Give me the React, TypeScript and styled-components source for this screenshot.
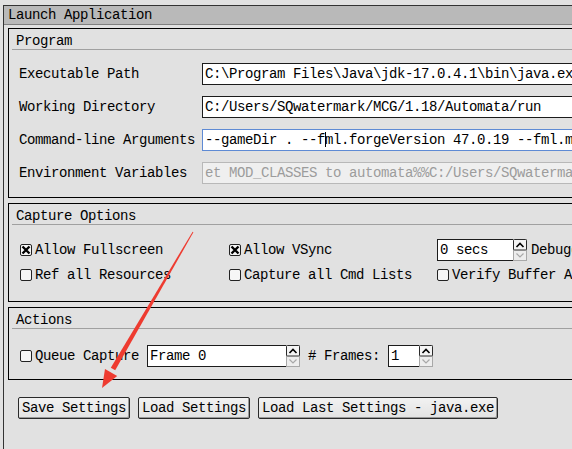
import styled, { createGlobalStyle } from 'styled-components';

const GlobalStyle = createGlobalStyle`
  html, body {
    margin: 0;
    padding: 0;
    background: #e1e1e1;
    overflow: hidden;
  }

  body {
    font-family: 'Liberation Mono', 'DejaVu Sans Mono', monospace;
    font-size: 14px;
    letter-spacing: -0.4px;
    color: #000;
  }
`;

type CheckProps = {
  label: string;
  checked?: boolean;
};

function Check({ label, checked }: CheckProps) {
  return (
    <CheckRow>
      <CheckBox>
        {checked && (
          <svg width='10' height='10' viewBox='0 0 10 10'>
            <path d='M1.5 1.5 L8.5 8.5 M8.5 1.5 L1.5 8.5' stroke='#000' strokeWidth='2.4' />
          </svg>
        )}
      </CheckBox>
      <span>{label}</span>
    </CheckRow>
  );
}

function SpinArrows() {
  return (
    <svg width='14' height='22' viewBox='0 0 14 22'>
      <rect x='0.5' y='0.5' width='13' height='21' fill='#ededed' stroke='#a8a8a8' />
      <rect x='0.5' y='0.5' width='13' height='10.5' rx='1' fill='#f4f4f4' stroke='#2a2a2a' />
      <path d='M3.5 8 L7 4.5 L10.5 8' stroke='#000' strokeWidth='1.6' fill='none' />
      <path d='M3.5 14.5 L7 18 L10.5 14.5' stroke='#a8a8a8' strokeWidth='1.2' fill='none' />
    </svg>
  );
}

type SpinProps = {
  value: string;
  width: number;
};

function Spin({ value, width }: SpinProps) {
  return (
    <SpinWrap>
      <SpinField $width={width}>{value}</SpinField>
      <SpinArrows />
    </SpinWrap>
  );
}

export default function App() {
  return (
    <Page>
      <GlobalStyle />
      <Window>
        <TitleBar>Launch Application</TitleBar>
        <Content>
          <GroupBox>
            <GroupTitle>Program</GroupTitle>
            <ProgramGrid>
              <Label>Executable Path</Label>
              <Field>C:\Program Files\Java\jdk-17.0.4.1\bin\java.exe</Field>
              <Label>Working Directory</Label>
              <Field>C:/Users/SQwatermark/MCG/1.18/Automata/run</Field>
              <Label>Command-line Arguments</Label>
              <Field $variant='focused'>
                --gameDir . --f<Caret />ml.forgeVersion 47.0.19 --fml.mcVersion 1.20.1
              </Field>
              <Label>Environment Variables</Label>
              <Field $variant='disabled'>
                et MOD_CLASSES to automata%%C:/Users/SQwatermark/MCG/1.18/Automata/run
              </Field>
            </ProgramGrid>
          </GroupBox>

          <GroupBox>
            <GroupTitle>Capture Options</GroupTitle>
            <CaptureGrid>
              <Check label='Allow Fullscreen' checked />
              <Check label='Allow VSync' checked />
              <InlineRow>
                <Spin value='0 secs' width={76} />
                <Text>Debugger Delay</Text>
              </InlineRow>
              <Check label='Ref all Resources' />
              <Check label='Capture all Cmd Lists' />
              <Check label='Verify Buffer Access' />
            </CaptureGrid>
          </GroupBox>

          <GroupBox>
            <GroupTitle>Actions</GroupTitle>
            <ActionsRow>
              <Check label='Queue Capture' />
              <Spin value='Frame 0' width={139} />
              <Text># Frames:</Text>
              <Spin value='1' width={31} />
            </ActionsRow>
          </GroupBox>

          <ButtonRow>
            <Button>Save Settings</Button>
            <Button>Load Settings</Button>
            <Button>Load Last Settings - java.exe</Button>
          </ButtonRow>
        </Content>
      </Window>

      <Annotation width='572' height='449' viewBox='0 0 572 449'>
        <polygon
          points='193.4,232.3 192.6,231.7 110.8,367.7 115.2,370.3'
          fill='#ee3b30'
        />
        <polygon points='102,388 117.2,375.9 105,368.9' fill='#ee3b30' />
      </Annotation>
    </Page>
  );
}

const Page = styled.div`
  position: relative;
  width: 572px;
  height: 449px;
  overflow: hidden;
`;

const Window = styled.div`
  margin: 5px 0 0 3px;
  width: 760px;
  height: 444px;
  box-sizing: border-box;
  border-left: 1px solid #333;
  border-top: 1px solid #333;
`;

const TitleBar = styled.div`
  height: 18px;
  line-height: 18px;
  padding-left: 4px;
  background: #b9b9b9;
  border-bottom: 1px solid #7f7f7f;
  white-space: nowrap;
`;

const Content = styled.div`
  display: flex;
  flex-direction: column;
  gap: 5px;
  padding: 3px 0 0 4px;
`;

const GroupBox = styled.div`
  border: 1px solid #000;
  padding: 0 3px;
`;

const GroupTitle = styled.div`
  padding: 4px 4px 0;
  height: 16px;
  line-height: 16px;
  border-bottom: 1px solid #a0a0a0;
`;

const ProgramGrid = styled.div`
  display: grid;
  grid-template-columns: 190px 1fr;
  grid-auto-rows: 22px;
  row-gap: 11px;
  align-items: center;
  padding: 13px 0 13px;
`;

const Label = styled.span`
  padding-left: 7px;
  white-space: nowrap;
`;

const Field = styled.div<{ $variant?: 'focused' | 'disabled' }>`
  height: 22px;
  box-sizing: border-box;
  padding: 0 2px;
  line-height: 20px;
  white-space: nowrap;
  overflow: hidden;
  background: ${({ $variant }) => ($variant === 'disabled' ? '#efefef' : '#fff')};
  color: ${({ $variant }) => ($variant === 'disabled' ? '#9c9c9c' : '#000')};
  border: 1px solid
    ${({ $variant }) =>
      $variant === 'focused' ? '#5e8ad4' : $variant === 'disabled' ? '#b8b8b8' : '#1c1c1c'};
`;

const Caret = styled.span`
  display: inline-block;
  width: 1px;
  height: 15px;
  margin-right: -1px;
  background: #000;
  vertical-align: -3px;
`;

const CaptureGrid = styled.div`
  display: grid;
  grid-template-columns: 209px 208px auto;
  grid-template-rows: 22px 18px;
  row-gap: 5px;
  align-items: center;
  padding: 14px 0 17px 8px;
`;

const CheckRow = styled.div`
  display: flex;
  align-items: center;
  gap: 3px;
  white-space: nowrap;
`;

const CheckBox = styled.span`
  width: 12px;
  height: 12px;
  box-sizing: border-box;
  border: 1px solid #222;
  border-radius: 2px;
  background: #f6f6f6;
  display: flex;
  align-items: center;
  justify-content: center;
`;

const InlineRow = styled.div`
  display: flex;
  align-items: center;
  gap: 4px;
  white-space: nowrap;
`;

const Text = styled.span`
  white-space: nowrap;
`;

const SpinWrap = styled.div`
  display: flex;
  height: 22px;
  flex: none;
`;

const SpinField = styled.div<{ $width: number }>`
  width: ${({ $width }) => $width}px;
  height: 22px;
  box-sizing: border-box;
  border: 1px solid #1c1c1c;
  border-right: none;
  background: #fff;
  padding: 0 2px;
  line-height: 20px;
  white-space: nowrap;
`;

const ActionsRow = styled.div`
  display: flex;
  align-items: center;
  gap: 8px;
  padding: 16px 0 12px 8px;
`;

const ButtonRow = styled.div`
  display: flex;
  gap: 8px;
  margin: 12px 0 0 10px;
`;

const Button = styled.button`
  height: 22px;
  padding: 0 3px;
  font: inherit;
  letter-spacing: inherit;
  color: #000;
  background: linear-gradient(#f2f2f2, #e2e2e2);
  border: 1px solid #2a2a2a;
  border-radius: 2px;
  box-shadow: inset -1px -1px 0 #9a9a9a;
  white-space: nowrap;
`;

const Annotation = styled.svg`
  position: absolute;
  left: 0;
  top: 0;
  pointer-events: none;
`;
